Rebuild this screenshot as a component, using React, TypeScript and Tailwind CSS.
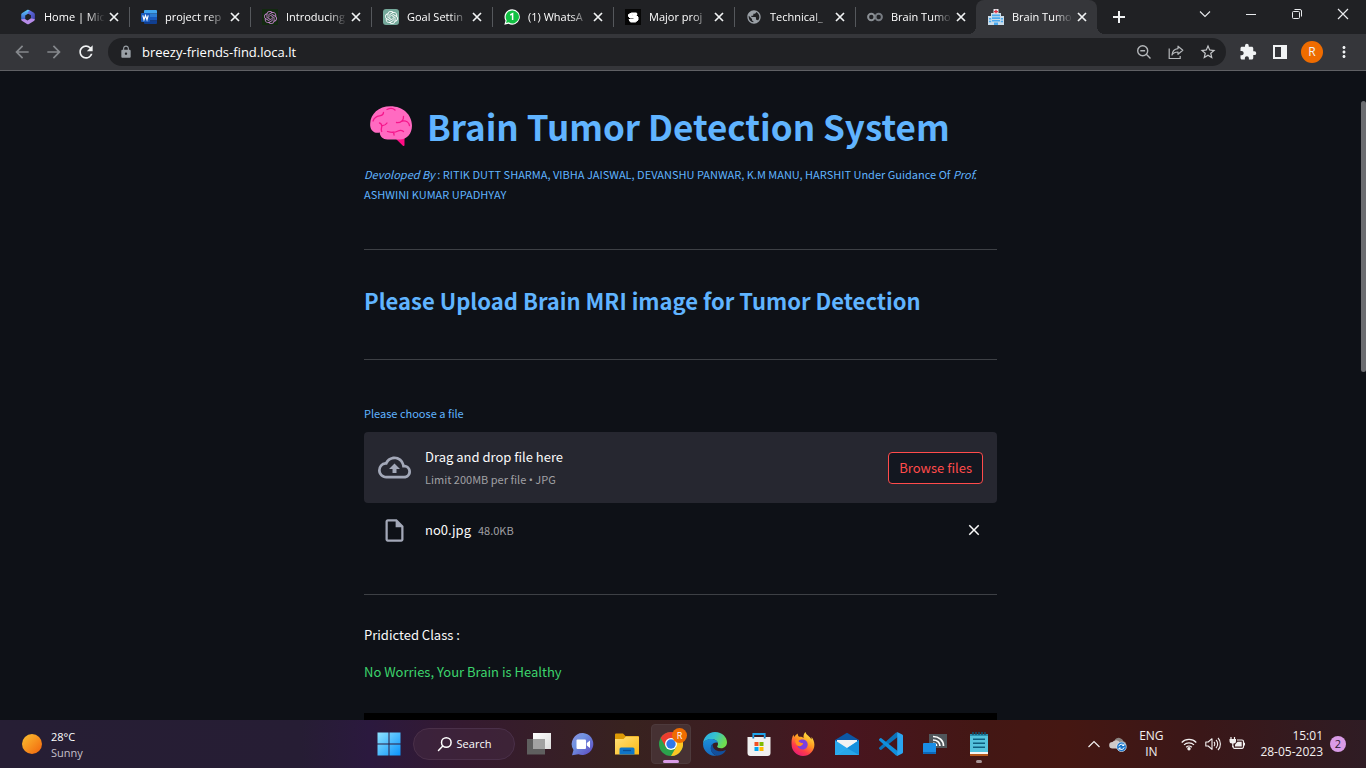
import React, { useRef } from "react";
import { SiOpenai } from "react-icons/si";
import {
  MdArrowBack,
  MdArrowForward,
  MdClose,
  MdExtension,
  MdLock,
  MdMoreVert,
  MdOutlineCloudUpload,
  MdOutlineInsertDriveFile,
  MdPublic,
  MdRefresh,
  MdStarBorder,
} from "react-icons/md";

/* ---------- favicons ---------- */

const M365Icon = () => (
  <svg viewBox="0 0 16 16" className="size-4">
    <defs>
      <linearGradient id="m365a" x1="0" y1="0" x2="0" y2="1">
        <stop offset="0" stopColor="#5fd0ff" />
        <stop offset="1" stopColor="#3b54c9" />
      </linearGradient>
      <linearGradient id="m365b" x1="0" y1="0" x2="1" y2="1">
        <stop offset="0" stopColor="#6a7df0" />
        <stop offset="1" stopColor="#3f3fa8" />
      </linearGradient>
    </defs>
    <path d="M7.5.8 2.2 3.9a2 2 0 0 0-1 1.700v5.200l4 .2V6.500L10 3.600 9.500 1.200a2 2 0 0 0-2-.4Z" fill="url(#m365a)" />
    <path d="m9.300 1 4.600 2.800c.6.400 1 1 1 1.700v5.200L11 9.500V6.200L7.300 4.300Z" fill="url(#m365b)" />
    <path d="M1.200 10.200c0 .9.400 1.500 1 1.900l4.800 2.900c.6.300 1.400.3 2 0l4.900-3c.6-.4 1-1 1-1.700L11 9.300 7.500 11.500 5 10Z" fill="#b68be8" />
  </svg>
);

const WordIcon = () => (
  <svg viewBox="0 0 16 16" className="size-4">
    <path d="M4 1h11a1 1 0 0 1 1 1v2.500H3V2a1 1 0 0 1 1-1Z" fill="#41a5ee" />
    <path d="M3 4.500h13V8H3z" fill="#2b7cd3" />
    <path d="M3 8h13v3.500H3z" fill="#185abd" />
    <path d="M3 11.500h13V14a1 1 0 0 1-1 1H4a1 1 0 0 1-1-1Z" fill="#103f91" />
    <rect y="4" width="9" height="9" rx="1" fill="#185abd" />
    <path d="m1.800 6.300 1.200 4.500 1.500-4.300L6 10.800l1.200-4.500" fill="none" stroke="#fff" strokeWidth="1.200" />
  </svg>
);

const OpenAiDark = () => (
  <span className="flex size-4 items-center justify-center bg-[#12290f] text-[13px] text-[#c583cf]">
    <SiOpenai />
  </span>
);

const OpenAiGreen = () => (
  <span className="flex size-4 items-center justify-center rounded-[3px] bg-[#75a99b] text-[13px] text-white">
    <SiOpenai />
  </span>
);

const WhatsAppIcon = () => (
  <svg viewBox="0 0 16 16" className="size-4">
    <path d="M8.200.200a7.700 7.700 0 0 0-6.700 11.500L.300 15.800l4.200-1.100A7.700 7.700 0 1 0 8.200.200Z" fill="#fff" />
    <path d="M8.200 1.500a6.500 6.500 0 0 0-5.500 9.900L2 14l2.700-.7A6.500 6.500 0 1 0 8.200 1.500Z" fill="#12c143" />
    <path d="M6.300 6 8.600 4.700V11" fill="none" stroke="#fff" strokeWidth="1.500" />
  </svg>
);

const StudocuIcon = () => (
  <svg viewBox="0 0 16 16" className="size-4">
    <path d="M0 0h16v16H0z" fill="#060606" />
    <path
      d="M11.500 4H6.500L3.500 5.500v2l1.500 1.500h4v1.500H4l1.500 2.500h5l2.500-2V8l-1.500-1.500H7.500V5.500h4.500Z"
      fill="#fff"
      stroke="#fff"
      strokeLinejoin="round"
    />
  </svg>
);

const ColabIcon = () => (
  <svg viewBox="0 0 16 16" className="size-4">
    <circle cx="4.300" cy="8" r="3.200" fill="none" stroke="#8b9095" strokeWidth="2" />
    <circle cx="11.700" cy="8" r="3.200" fill="none" stroke="#777c82" strokeWidth="2" />
  </svg>
);

const HospitalIcon = () => (
  <svg viewBox="0 0 16 16" className="size-4">
    <path d="M3 4h10v12H3zM0 7h4v9H0zM12 7h4v9h-4z" fill="#c9dcea" />
    <path d="M5.500 0h5v4.500h-5z" fill="#e3e9ee" />
    <path d="M7.300.7h1.400v1.200H10v1.300H8.700v1.100H7.300V3.200H6V1.900h1.300z" fill="#dd2e44" />
    <path d="M4 5.500h8v1.700H4zM4 8.200h8v1.700H4zM4 10.900h8v1.700H4zM1 9h2.200v1.500H1zM1 11.700h2.200v1.500H1zM12.800 9H15v1.500h-2.200zM12.800 11.700H15v1.500h-2.200zM6 13.500h4V16H6z" fill="#4aa8ee" />
  </svg>
);

const tabs = [
  { title: "Home | Mic", icon: <M365Icon /> },
  { title: "project rep", icon: <WordIcon /> },
  { title: "Introducing", icon: <OpenAiDark /> },
  { title: "Goal Settin", icon: <OpenAiGreen /> },
  { title: "(1) WhatsA", icon: <WhatsAppIcon /> },
  { title: "Major proj", icon: <StudocuIcon /> },
  { title: "Technical_", icon: <MdPublic className="size-4 text-[#9aa0a6]" /> },
  { title: "Brain Tumo", icon: <ColabIcon /> },
];

function TabItem({ title, icon, active = false }: { title: string; icon: React.ReactNode; active?: boolean }) {
  return (
    <div
      className={
        active
          ? "relative flex w-[121px] items-center rounded-t-lg bg-[#35363a] pr-2 pl-3"
          : "flex w-[121px] items-center pr-2 pl-3"
      }
    >
      {active && (
        <>
          <span className="absolute bottom-0 -left-2 size-2 bg-[radial-gradient(circle_at_0_0,#202124_8px,#35363a_8px)]" />
          <span className="absolute -right-2 bottom-0 size-2 bg-[radial-gradient(circle_at_100%_0,#202124_8px,#35363a_8px)]" />
        </>
      )}
      <span className="shrink-0">{icon}</span>
      <button className="ml-2 min-w-0 flex-1 overflow-hidden text-left text-[11px] leading-4 whitespace-nowrap text-white [mask-image:linear-gradient(to_right,black_70%,transparent)]">
        {title}
      </button>
      <button aria-label={`Close ${title}`} className="ml-0.5 shrink-0 text-[#f1f3f4]">
        <svg viewBox="0 0 14 14" className="size-3.5">
          <path d="m3 3 8 8m0-8-8 8" stroke="currentColor" strokeWidth="1.700" />
        </svg>
      </button>
    </div>
  );
}

function TabStrip() {
  return (
    <div className="flex h-[34px] shrink-0 bg-[#202124] pl-2">
      {tabs.map((t, i) => (
        <div key={i} className="flex">
          <TabItem {...t} />
          {i < tabs.length - 1 && <span className="-mr-px h-5 w-px self-center bg-[#55585c]" />}
        </div>
      ))}
      <TabItem title="Brain Tumo" icon={<HospitalIcon />} active />
      <button aria-label="New tab" className="ml-2 flex w-7 items-center justify-center text-[#f1f3f4]">
        <svg viewBox="0 0 14 14" className="size-3.5">
          <path d="M7 1v12M1 7h12" stroke="currentColor" strokeWidth="2" />
        </svg>
      </button>
      <div className="ml-auto flex h-7 text-[#e8eaed]">
        <button aria-label="Search tabs" className="flex w-[46px] items-center justify-center">
          <svg viewBox="0 0 12 12" className="size-3">
            <path d="m1 3.500 5 5 5-5" fill="none" stroke="currentColor" strokeWidth="1.100" />
          </svg>
        </button>
        <button aria-label="Minimize" className="flex w-[46px] items-center justify-center">
          <svg viewBox="0 0 12 12" className="size-3">
            <path d="M1 6.500h10" stroke="currentColor" />
          </svg>
        </button>
        <button aria-label="Restore" className="flex w-[46px] items-center justify-center">
          <svg viewBox="0 0 12 12" className="size-3" fill="none" stroke="currentColor">
            <rect x="1.500" y="3.500" width="7" height="7" rx="1" />
            <path d="M3.500 1.500H9a1.500 1.500 0 0 1 1.500 1.500v5.500" />
          </svg>
        </button>
        <button aria-label="Close window" className="flex w-[46px] items-center justify-center">
          <svg viewBox="0 0 12 12" className="size-3">
            <path d="m1 1 10 10M11 1 1 11" stroke="currentColor" strokeWidth="1.200" />
          </svg>
        </button>
      </div>
    </div>
  );
}

function Toolbar() {
  const cell = "flex w-8 items-center justify-center";
  return (
    <div className="flex h-[37px] shrink-0 items-stretch border-b border-[#5f6064] bg-[#35363a] px-1.5 text-[18px] text-[#f1f3f4]">
      <button aria-label="Back" className={`${cell} text-[#85888c]`}>
        <MdArrowBack className="size-5" />
      </button>
      <button aria-label="Forward" className={`${cell} text-[#85888c]`}>
        <MdArrowForward className="size-5" />
      </button>
      <button aria-label="Reload" className={cell}>
        <MdRefresh className="size-5" />
      </button>
      <div className="mx-1.5 my-1 flex flex-1 items-center rounded-full bg-[#202124] pr-0.5 pl-[11px]">
        <MdLock className="size-3.5 text-[#9aa0a6]" />
        <input
          aria-label="Address"
          defaultValue="breezy-friends-find.loca.lt"
          className="ml-[9px] min-w-0 flex-1 bg-transparent text-[13px] leading-5 text-white outline-none"
        />
        <button aria-label="Zoom" className={`${cell} text-[#b4b7ba]`}>
          <svg viewBox="0 0 16 16" className="size-4" fill="none" stroke="currentColor" strokeWidth="1.400">
            <circle cx="6.700" cy="6.700" r="5" />
            <path d="m10.300 10.300 4.200 4.200M4.300 6.700h4.800" />
          </svg>
        </button>
        <button aria-label="Share" className={`${cell} text-[#b4b7ba]`}>
          <svg viewBox="0 0 16 16" className="size-4" fill="none" stroke="currentColor" strokeWidth="1.200">
            <path d="M1.200 4.500v10h11v-2.500" />
            <path d="M10 2.200 14.800 6.300 10 10.300V8C7 8 5.200 9 4 11c.3-3.500 2.500-6 6-6.400Z" strokeLinejoin="round" />
          </svg>
        </button>
        <button aria-label="Bookmark" className={`${cell} text-[#c6c8cb]`}>
          <MdStarBorder />
        </button>
      </div>
      <button aria-label="Extensions" className={cell}>
        <MdExtension />
      </button>
      <button aria-label="Side panel" className={cell}>
        <svg viewBox="0 0 14 14" className="size-3.5">
          <path d="M0 0h14v14H0zM2 2v10h6V2z" fill="currentColor" fillRule="evenodd" />
        </svg>
      </button>
      <button aria-label="Profile" className={cell}>
        <span className="flex size-[22px] items-center justify-center rounded-full bg-[#ef6c00] text-[12px]">R</span>
      </button>
      <button aria-label="Menu" className={cell}>
        <MdMoreVert />
      </button>
    </div>
  );
}

/* ---------- page ---------- */

const BrainIcon = () => (
  <svg viewBox="0 0 44 42" className="h-[42px] w-11" fill="none">
    <path d="M25 32h10.500v8.200c0 .8-1 1.200-1.600.5Z" fill="#ff0d84" />
    <path
      d="M10.800 27.500C5 29 .6 25 1.200 18.500 1.500 9 9.500 1.200 21.500 1.200c12.500 0 21.300 8.300 21.500 19.300.1 8.500-5.500 14-12 14H18.500c-4.500 0-7.700-3-7.700-7Z"
      fill="#ff6ac1"
    />
    <g stroke="#f5168b" strokeWidth="1.300" strokeLinecap="round">
      <path d="M4 16c1.500-4 4.500-5 6.500-5.200 3-.300 4-1.800 4-3.500M18 4.500c3-1.500 6-1.300 8 .5M10.500 18c2 .5 2.800 2.500 2 5-.500 1.500-.2 2.500.2 3.500M12.500 20.500c3 .500 4.500-1 5.500-2.500M18.500 26.500c5 1.500 8 1 10.500-.5 1.500-.8 3.500-1 5.500.5M24 27c1 1 1.200 2 1 3M34.500 11.500c.5 4-3 6.500-7 6M33.500 16c4-.5 6.500 2 7 4.500" />
    </g>
  </svg>
);

function Page() {
  const fileRef = useRef<HTMLInputElement>(null);
  const rule = "border-t border-[#3d4045]";
  return (
    <div className="flex min-h-0 flex-1 overflow-hidden bg-[#0e1117] font-['Noto_Sans_CJK_SC',sans-serif]">
      <main className="min-w-0 flex-1 pt-8">
        <div className="mx-auto max-w-[633px] text-[#60b4ff]">
          <h1 className="flex items-center pl-[5px] text-[35px] leading-[46px] font-bold">
            <BrainIcon />
            <span className="ml-3.5 whitespace-nowrap">Brain Tumor Detection System</span>
          </h1>
          <p className="mt-[15px] text-[11px] leading-5">
            <em>Devoloped By</em> : RITIK DUTT SHARMA, VIBHA JAISWAL, DEVANSHU PANWAR, K.M MANU, HARSHIT Under Guidance Of{" "}
            <em>Prof.</em> ASHWINI KUMAR UPADHYAY
          </p>
          <hr className={`mt-[45px] ${rule}`} />
          <h2 className="mt-[34px] text-[22px] leading-8 font-bold whitespace-nowrap">
            Please Upload Brain MRI image for Tumor Detection
          </h2>
          <hr className={`mt-[43px] ${rule}`} />
          <label htmlFor="mri" className="mt-[43px] block text-[11px] leading-5">
            Please choose a file
          </label>
          <section className="mt-[9px] flex h-[71px] items-center rounded bg-[#262730] px-3.5">
            <MdOutlineCloudUpload className="size-[33px] text-[#a3a8b8]" />
            <div className="ml-3.5 flex flex-col pt-0.5">
              <span className="text-[13px] leading-[22px] text-[#fafafa]">Drag and drop file here</span>
              <small className="text-[11px] leading-[22px] text-[#a0a0a4]">
                Limit 200MB per file <span className="font-['Open_Sans',sans-serif]">•</span> JPG
              </small>
            </div>
            <input ref={fileRef} id="mri" type="file" accept=".jpg" className="sr-only" />
            <button
              onClick={() => fileRef.current?.click()}
              className="ml-auto h-8 rounded border border-[#ff4b4b] bg-[#131720] px-2.5 text-[13px] leading-[30px] text-[#ff4b4b]"
            >
              Browse files
            </button>
          </section>
          <div className="mt-[11px] flex h-8 items-center px-3.5 leading-5">
            <span className="flex w-[33px] justify-center">
              <MdOutlineInsertDriveFile className="size-[27px] text-[#a3a8b8]" />
            </span>
            <span className="ml-3.5 text-[13px] text-[#fafafa]">no0.jpg</span>
            <small className="ml-[7px] text-[11px] text-[#a0a0a4]">48.0KB</small>
            <button aria-label="Remove file" className="ml-auto text-[#fafafa]">
              <MdClose className="size-[18px]" />
            </button>
          </div>
          <hr className={`mt-12 ${rule}`} />
          <p className="mt-[30px] text-[13px] leading-5 text-[#fafafa]">Pridicted Class :</p>
          <p className="mt-[17px] text-[13px] leading-5 text-[#3dd56d]">No Worries, Your Brain is Healthy</p>
          <div className="mt-[31px] h-72 bg-black" />
        </div>
      </main>
      <div className="w-[5px] pt-[30px]">
        <div className="h-[271px] rounded-full bg-[#6b6c70]" />
      </div>
    </div>
  );
}

/* ---------- taskbar ---------- */

const StartIcon = () => (
  <svg viewBox="0 0 24 24" className="size-6">
    <defs>
      <linearGradient id="win" x1="0" y1="0" x2="1" y2="1">
        <stop offset="0" stopColor="#8fe3ff" />
        <stop offset="1" stopColor="#0a93fb" />
      </linearGradient>
    </defs>
    <path d="M.500.500h11v11H.500zM12.500.500h11v11h-11zM.500 12.500h11v11H.500zM12.500 12.500h11v11h-11z" fill="url(#win)" />
  </svg>
);

const TaskViewIcon = () => (
  <svg viewBox="0 0 24 24" className="size-6">
    <defs>
      <linearGradient id="tv" x1="0" y1="0" x2="1" y2="1">
        <stop offset="0" stopColor="#fff" />
        <stop offset="1" stopColor="#dcdcdc" />
      </linearGradient>
    </defs>
    <path d="M6 1h18v16H6z" fill="url(#tv)" />
    <path d="M0 7h18v15.500H0z" fill="#5f5f5f" />
    <path d="M6 7h12v10H6z" fill="#a2a2a2" />
  </svg>
);

const ChatIcon = () => (
  <svg viewBox="0 0 24 24" className="size-6">
    <defs>
      <linearGradient id="chat" x1="0" y1="0" x2="1" y2="1">
        <stop offset="0" stopColor="#8f8fe0" />
        <stop offset=".35" stopColor="#7093e0" />
        <stop offset="1" stopColor="#5b45c0" />
      </linearGradient>
    </defs>
    <path d="M12 1a11 11 0 1 1-4.500 21.300L1 23.200l1.500-5.200A11 11 0 0 1 12 1Z" fill="url(#chat)" />
    <rect x="5.500" y="7.500" width="9.500" height="9.500" rx="1" fill="#fff" />
    <path d="m15.800 11 3.200-2.500v7.500l-3.200-2.500Z" fill="#fff" />
  </svg>
);

const FolderIcon = () => (
  <svg viewBox="0 0 24 24" className="size-6">
    <defs>
      <linearGradient id="fld" x1="0" y1="0" x2="1" y2="1">
        <stop offset="0" stopColor="#ffe27a" />
        <stop offset="1" stopColor="#fdb813" />
      </linearGradient>
    </defs>
    <path d="M0 2.500a1 1 0 0 1 1-1h7l2.500 2.500H23a1 1 0 0 1 1 1v4H0Z" fill="#dd9a05" />
    <path d="M0 7h8.500L11 4.500h12a1 1 0 0 1 1 1V22.500H0Z" fill="url(#fld)" />
    <path d="M4.500 22.500V17a1.500 1.500 0 0 1 1.500-1.500h12a1.500 1.500 0 0 1 1.500 1.500v5.500Z" fill="#0f76c8" />
    <path d="M8 18.500h8" stroke="#0a4f96" strokeWidth="1.300" />
  </svg>
);

const ChromeIcon = () => (
  <svg viewBox="0 0 24 24" className="size-6">
    <circle cx="12" cy="12" r="12" fill="#2ba24c" />
    <path d="M1.600 6A12 12 0 0 1 22.400 6L12 6.500 6.800 15Z" fill="#ea3d2f" />
    <path d="M22.400 6A12 12 0 0 1 12 24l5.200-9L12 6Z" fill="#fcc624" />
    <circle cx="12" cy="12" r="6" fill="#fff" />
    <circle cx="12" cy="12" r="4.700" fill="#2f78ea" />
  </svg>
);

const EdgeIcon = () => (
  <svg viewBox="0 0 24 24" className="size-6">
    <defs>
      <linearGradient id="edg1" x1="0" y1="0" x2="1" y2=".4">
        <stop offset="0" stopColor="#2aa7e8" />
        <stop offset=".5" stopColor="#35c2cf" />
        <stop offset="1" stopColor="#6fdc4f" />
      </linearGradient>
      <linearGradient id="edg2" x1="0" y1="0" x2="0" y2="1">
        <stop offset="0" stopColor="#1b8fdc" />
        <stop offset="1" stopColor="#1569bd" />
      </linearGradient>
    </defs>
    <path d="M0 12C.3 5 5.300 0 12 0c7.500 0 12 5.500 12 10.200 0 3.600-2.600 6-5.900 6-2.700 0-4-.9-4-1.700 0-.5.900-.9.900-2.600C15 9.500 12.300 7 8.600 7 4 7 .8 9.500 0 12Z" fill="url(#edg1)" />
    <path d="M0 12C.8 8.500 4.500 7 8.200 7c3.600 0 6.300 1.700 6.700 4-1.400-1-5.900-.5-6.900 4-.7 4 2 8 6 8.700A12 12 0 0 1 0 12Z" fill="url(#edg2)" />
    <path d="M9.800 11.500C6 15 7.500 22 14 23.700c4 0 7-2.200 8.600-4.900.3-.5-.1-.9-.6-.6-5 2.600-13.300.6-12.200-6.700Z" fill="#124f9c" />
  </svg>
);

const StoreIcon = () => (
  <svg viewBox="0 0 24 24" className="size-6">
    <path d="M6.300 6V2h11.400v4" fill="none" stroke="#1fa4ea" strokeWidth="1.800" />
    <path d="M.500 5h23v16a3 3 0 0 1-3 3h-17a3 3 0 0 1-3-3Z" fill="#f0f0f0" />
    <path d="M5.400 5h1.800v1.500H5.400zM16.800 5h1.800v1.500h-1.800z" fill="#1577b8" />
    <path d="M7.500 10h4v4h-4z" fill="#f25022" />
    <path d="M12.500 10h4v4h-4z" fill="#7fba00" />
    <path d="M7.500 15h4v4h-4z" fill="#00a4ef" />
    <path d="M12.500 15h4v4h-4z" fill="#ffb900" />
  </svg>
);

const FirefoxIcon = () => (
  <svg viewBox="0 0 24 24" className="size-6">
    <defs>
      <linearGradient id="ffx" x1=".8" y1="0" x2=".2" y2="1">
        <stop offset="0" stopColor="#fff04a" />
        <stop offset=".4" stopColor="#ff9a20" />
        <stop offset=".7" stopColor="#ff3c4a" />
        <stop offset="1" stopColor="#e0157f" />
      </linearGradient>
    </defs>
    <path d="M14.500 0c-2 1.800-2.300 4.500-1.800 6-1.500-1.300-3.200-1.500-4.500-1.200C7 4 6.600 2.700 6.800 1.500 5.300 2.200 4.200 3.500 3.600 4.800c-.7-.5-1-1.500-1-2.400C.9 5 .3 9 .6 12.500a11.400 11.400 0 0 0 22.800.2c0-3.200-1.200-6-3-7.800.2 1 .2 1.900 0 2.600C19.300 4.300 15.300 3.500 14.500 0Z" fill="url(#ffx)" />
    <path d="M7.300 9.300c1.700-2.200 6.200-2.400 8.400.2 1.900 2.700 1 6.300-1.800 7.500-3.100 1.400-6.800-.2-7.600-3.400 1.300.8 3.200.8 4.300-.3 1.300-.9 1.700-1.700.9-2.200-1.400-.3-2.700.2-4.200-1.800Z" fill="#7a3fe0" />
    <path d="M4 8.500c1-1.500 3-2 5-1.300-1.500.5-1.800 1.300-1.700 2.100 1.500 2 2.800 1.500 4.200 1.800.8.500.4 1.300-.9 2.200-2.600 2.200-6.100 0-6.600-4.800Z" fill="#ff8f1f" />
  </svg>
);

const MailIcon = () => (
  <svg viewBox="0 0 24 24" className="size-6">
    <path d="M12 .8 24 8v5H0V8Z" fill="#0c57a4" />
    <path d="M2 8h20v8H2z" fill="#f2f2f2" />
    <path d="M0 8.200 12 16l12-7.800V23H0Z" fill="#2aa9ee" />
    <path d="M24 8.200V23H2Z" fill="#1590dd" />
    <path d="M0 23 12 16l12 7Z" fill="#3cbcf5" opacity=".5" />
  </svg>
);

const VsCodeIcon = () => (
  <svg viewBox="0 0 24 24" className="size-6">
    <path d="M18 5.500 2.400 17.700a1 1 0 0 1-1.300 0L.3 17a1 1 0 0 1 0-1.500L17.300.300 20 3Z" fill="#0b72b9" />
    <path d="M18 18.500 2.400 6.300a1 1 0 0 0-1.300 0L.3 7a1 1 0 0 0 0 1.500l17 15.200L20 21Z" fill="#118fdc" />
    <path d="M17.300.3a1.500 1.500 0 0 1 1.300 0l4.600 2.200c.5.200.8.700.8 1.300v16.400c0 .6-.3 1.100-.8 1.300l-4.600 2.200c-.5.300-1 .2-1.300 0 .5.200.9-.3.900-.9V1.200c0-.6-.4-1.100-.9-.9Z" fill="#2aa5f0" />
  </svg>
);

const CastIcon = () => (
  <svg viewBox="0 0 24 24" className="size-6">
    <path d="M6 2h18v14H6z" fill="#50565b" />
    <g fill="none" stroke="#fff" strokeWidth="1.700">
      <path d="M10 4.500c6 0 10.500 4 10.500 9.500M10 8c4 0 7 2.500 7 6M10 11.300c2 0 3.500 1.200 3.500 2.700" />
    </g>
    <rect y="11" width="13" height="11" rx="1" fill="#1a8ee6" />
    <path d="M0 20h13v1a1 1 0 0 1-1 1H1a1 1 0 0 1-1-1Z" fill="#0d67b8" />
  </svg>
);

const NotepadIcon = () => (
  <svg viewBox="0 0 24 24" className="size-6">
    <path d="M3 20h18v4H3z" fill="#b65a1c" />
    <path d="M3 19h18v3H3z" fill="#f4f4f4" />
    <path d="M3 2h18v18H3z" fill="#55c3dd" />
    <path d="M3 2h18v2H3z" fill="#2a8fae" />
    <path d="M6 0v3M9 0v3M12 0v3M15 0v3M18 0v3" stroke="#0f5472" strokeWidth="1.500" />
    <path d="M6 7.200h12M6 11.200h12M6 15.200h12" stroke="#0f5f80" strokeWidth="1.600" />
  </svg>
);

function AppButton({ label, children }: { label: string; children: React.ReactNode }) {
  return (
    <button aria-label={label} className="flex size-10 items-center justify-center">
      {children}
    </button>
  );
}

function Tray() {
  return (
    <div className="flex items-center justify-end pr-5 text-[12px] leading-4 text-[#f3f0f0]">
      <button aria-label="Hidden icons" className="mr-2">
        <svg viewBox="0 0 14 14" className="size-3.5" fill="none" stroke="currentColor" strokeWidth="1.200">
          <path d="m1.500 10 5.500-5.500 5.500 5.500" />
        </svg>
      </button>
      <svg viewBox="0 0 18 16" className="h-4 w-[18px]">
        <path d="M6 3.500a5 5 0 0 1 8.500 1.800A3.500 3.500 0 0 1 15 12H7Z" fill="#8b8583" />
        <path d="M3.500 12.500a3.300 3.300 0 0 1 0-6.600 4.500 4.500 0 0 1 7.500 1l1 5.600Z" fill="#cfc9c8" />
        <circle cx="12.500" cy="10.800" r="4.800" fill="#1673c9" stroke="#fff" strokeWidth=".6" />
        <path d="M9.800 10.300a2.800 2.800 0 0 1 5-1M15.200 11.300a2.800 2.800 0 0 1-5 1M15 7.700v1.800h-1.800M10 13.900v-1.800h1.800" fill="none" stroke="#fff" strokeWidth="1" />
      </svg>
      <button className="ml-2 w-8 text-center">
        ENG
        <br />
        IN
      </button>
      <button aria-label="Network, volume and battery" className="ml-3.5 flex items-center gap-2">
        <svg viewBox="0 0 16 16" className="size-4" fill="none" stroke="currentColor" strokeWidth="1.200">
          <path d="M.700 6.500a10.300 10.300 0 0 1 14.600 0M3 8.900a7 7 0 0 1 10 0M5.200 11.200a4 4 0 0 1 5.600 0" />
          <circle cx="8" cy="12.800" r="1.100" fill="currentColor" />
        </svg>
        <svg viewBox="0 0 16 16" className="size-4" fill="none" stroke="currentColor" strokeWidth="1.100">
          <path d="M.8 6v4h2.400L7 13.300V2.700L3.200 6Z" strokeLinejoin="round" />
          <path d="M9 6c1 1 1 3 0 4M11 4c2.200 2 2.200 6 0 8M13 2c3.200 3.200 3.200 8.800 0 12" />
        </svg>
        <svg viewBox="0 0 16 16" className="size-4" fill="none" stroke="currentColor" strokeWidth="1.200">
          <path d="M8 4h5a1.500 1.500 0 0 1 1.500 1.500v5.300a1.500 1.500 0 0 1-1.500 1.500H5.500A1.500 1.500 0 0 1 4 10.800V10" />
          <path d="M8.500 5.800h4.200v4.700H6V8.500Z" fill="currentColor" stroke="none" />
          <path d="M15.500 6.800v2.800M2 1v2.500M5.500 1v2.500" />
          <path d="M.500 3h6.500v2a2.500 2.500 0 0 1-2.500 2.500H3A2.500 2.500 0 0 1 .500 5Z" fill="currentColor" stroke="none" />
          <path d="M3.800 7v4" />
        </svg>
      </button>
      <button className="ml-[15px] text-right whitespace-nowrap">
        15:01
        <br />
        28-05-2023
      </button>
      <span className="ml-[7px] flex size-4 items-center justify-center rounded-full bg-[#d99be6] text-[11px] text-[#2b1830]">
        2
      </span>
    </div>
  );
}

function Taskbar() {
  return (
    <footer className="grid h-12 shrink-0 grid-cols-[1fr_auto_1fr] bg-[linear-gradient(90deg,#261e34_0%,#261d34_22%,#2b193e_27%,#351a30_34%,#38221f_46%,#3c1d22_54%,#48151f_62%,#431714_72%,#451712_78%,#3a1718_88%,#2f1c24_100%)]">
      <div className="flex items-center pl-[22px] text-[11px] leading-4">
        <span className="size-5 rounded-full bg-linear-to-br from-[#f8c030] to-[#f0600a]" />
        <div className="ml-[9px] pt-px">
          <div className="text-white">28°C</div>
          <div className="text-[#c5c0ca]">Sunny</div>
        </div>
      </div>
      <nav className="flex items-center gap-1 pl-0.5">
        <AppButton label="Start">
          <StartIcon />
        </AppButton>
        <button className="flex h-8 w-[102px] items-center justify-center gap-1 rounded-full border border-[#4a3049] bg-[#42284099] text-[11px] text-white">
          <svg viewBox="0 0 16 16" className="size-4" fill="none" stroke="currentColor" strokeWidth="1.500">
            <circle cx="9.300" cy="6.500" r="4.800" />
            <path d="M5.800 10 1.500 14.500" strokeLinecap="round" />
          </svg>
          Search
        </button>
        <AppButton label="Task view">
          <TaskViewIcon />
        </AppButton>
        <AppButton label="Chat">
          <ChatIcon />
        </AppButton>
        <AppButton label="File Explorer">
          <FolderIcon />
        </AppButton>
        <button
          aria-label="Google Chrome"
          className="relative flex size-10 items-center justify-center rounded border border-[#4d3a3c] bg-[#463133]"
        >
          <ChromeIcon />
          <span className="absolute top-[3px] right-[3px] flex size-[15px] items-center justify-center rounded-full bg-[#ef6c00] text-[9px] text-white">
            R
          </span>
          <span className="absolute bottom-0 left-[11px] h-[3px] w-4 rounded-full bg-[#d99be6]" />
        </button>
        <AppButton label="Microsoft Edge">
          <EdgeIcon />
        </AppButton>
        <AppButton label="Microsoft Store">
          <StoreIcon />
        </AppButton>
        <AppButton label="Firefox">
          <FirefoxIcon />
        </AppButton>
        <AppButton label="Mail">
          <MailIcon />
        </AppButton>
        <AppButton label="Visual Studio Code">
          <VsCodeIcon />
        </AppButton>
        <AppButton label="Project">
          <CastIcon />
        </AppButton>
        <button aria-label="Notepad" className="relative flex size-10 items-center justify-center">
          <NotepadIcon />
          <span className="absolute bottom-px left-[17px] h-[3px] w-1.5 rounded-full bg-[#a89495]" />
        </button>
      </nav>
      <Tray />
    </footer>
  );
}

export default function App() {
  return (
    <div className="flex h-screen flex-col overflow-hidden font-['Open_Sans',sans-serif]">
      <TabStrip />
      <Toolbar />
      <Page />
      <Taskbar />
    </div>
  );
}
